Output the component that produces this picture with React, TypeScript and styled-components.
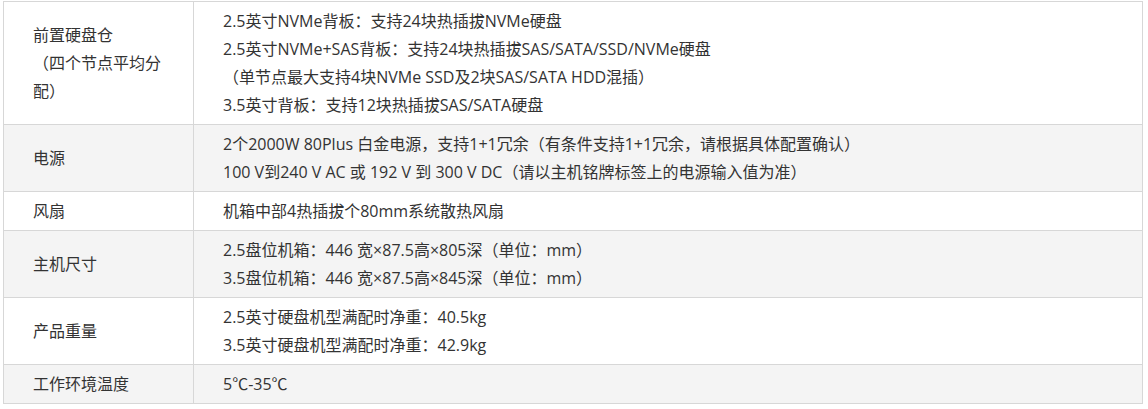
import React from "react";
import styled, { createGlobalStyle } from "styled-components";

const Global = createGlobalStyle`
  html, body { margin: 0; padding: 0; background: #fff; }
  body { font-family: "Open Sans", "Noto Sans CJK SC", sans-serif; }
`;

const Wrap = styled.div`
  padding: 1px 0 0 3px;
`;

const Table = styled.table`
  width: 1140px;
  border-collapse: collapse;
  font-size: 16px;
  color: #333;
`;

const Row = styled.tr<{ $alt?: boolean }>`
  background: ${(p) => (p.$alt ? "#f4f4f4" : "#fff")};
`;

const Cell = styled.td<{ $label?: boolean }>`
  border: 1px solid #d7d7d7;
  padding: 5px 29px;
  line-height: 28px;
  vertical-align: middle;
  width: ${(p) => (p.$label ? "131px" : "auto")};
`;

const Line = styled.div``;

const rows: { label: string[]; lines: string[] }[] = [
  {
    label: ["前置硬盘仓", "（四个节点平均分配）"],
    lines: [
      "2.5英寸NVMe背板：支持24块热插拔NVMe硬盘",
      "2.5英寸NVMe+SAS背板：支持24块热插拔SAS/SATA/SSD/NVMe硬盘",
      "（单节点最大支持4块NVMe SSD及2块SAS/SATA HDD混插）",
      "3.5英寸背板：支持12块热插拔SAS/SATA硬盘",
    ],
  },
  {
    label: ["电源"],
    lines: [
      "2个2000W 80Plus 白金电源，支持1+1冗余（有条件支持1+1冗余，请根据具体配置确认）",
      "100 V到240 V AC 或 192 V 到 300 V DC（请以主机铭牌标签上的电源输入值为准）",
    ],
  },
  { label: ["风扇"], lines: ["机箱中部4热插拔个80mm系统散热风扇"] },
  {
    label: ["主机尺寸"],
    lines: [
      "2.5盘位机箱：446 宽×87.5高×805深（单位：mm）",
      "3.5盘位机箱：446 宽×87.5高×845深（单位：mm）",
    ],
  },
  {
    label: ["产品重量"],
    lines: ["2.5英寸硬盘机型满配时净重：40.5kg", "3.5英寸硬盘机型满配时净重：42.9kg"],
  },
  { label: ["工作环境温度"], lines: ["5℃-35℃"] },
];

export default function App() {
  return (
    <>
      <Global />
      <Wrap>
        <Table>
          <tbody>
            {rows.map((r, i) => (
              <Row key={i} $alt={i % 2 === 1}>
                <Cell $label>
                  {r.label.map((l, j) => (
                    <Line key={j}>{l}</Line>
                  ))}
                </Cell>
                <Cell>
                  {r.lines.map((l, j) => (
                    <Line key={j}>{l}</Line>
                  ))}
                </Cell>
              </Row>
            ))}
          </tbody>
        </Table>
      </Wrap>
    </>
  );
}
